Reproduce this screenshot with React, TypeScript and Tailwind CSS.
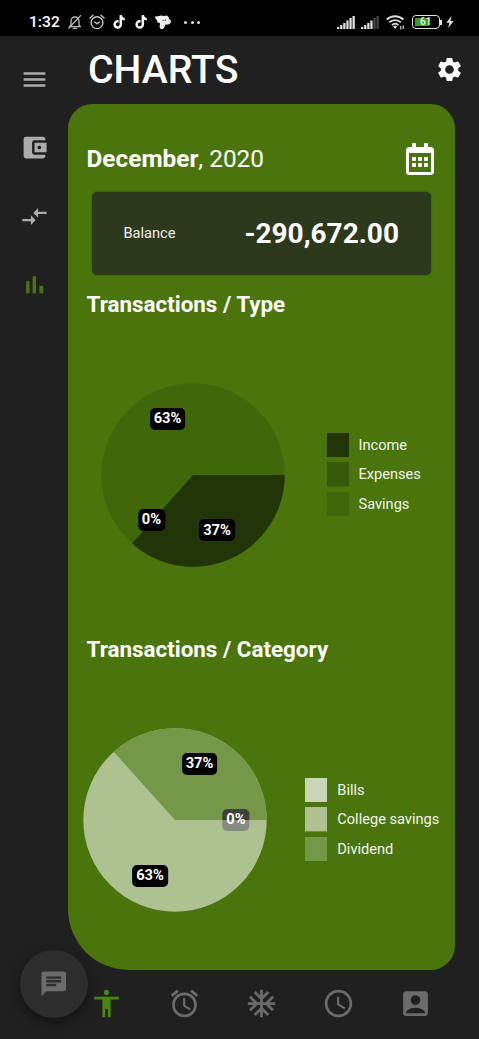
import {
  MdMenu,
  MdAccountBalanceWallet,
  MdCompareArrows,
  MdSettings,
  MdAccessibility,
  MdAlarm,
  MdAcUnit,
  MdAccessTime,
  MdAccountBox,
  MdChat,
} from "react-icons/md";
import { FaRegCalendarAlt } from "react-icons/fa";

function Bars() {
  return (
    <svg width="29" height="29" viewBox="0 0 29 29" fill="#49750c">
      <rect x="6.2" y="11.3" width="3.3" height="12" />
      <rect x="12.6" y="6.2" width="3.4" height="17.1" />
      <rect x="19.4" y="15.8" width="3.8" height="7.5" />
    </svg>
  );
}

function BellOff() {
  return (
    <svg width="14" height="16" viewBox="0 0 14 16" fill="none" stroke="#bdbdbd" strokeWidth="1.3">
      <path d="M3 11V7a4 4 0 0 1 8 0v4l1.4 1.6H1.6L3 11Z" strokeLinejoin="round" />
      <path d="M5.3 14.4h3.4M.8 14 12.6 1.6" strokeLinecap="round" />
    </svg>
  );
}

function AlarmFace() {
  return (
    <svg width="16" height="16" viewBox="0 0 16 16" fill="none" stroke="#c8c8c8" strokeWidth="1.4" strokeLinecap="round">
      <circle cx="8" cy="8.7" r="5.9" />
      <path d="M1 4 4 1.3M15 4l-3-2.7M5.8 8l2.2 1.8L10.4 8" />
    </svg>
  );
}

function Note() {
  return (
    <svg width="12" height="14" viewBox="0 0 12 14" fill="none" stroke="#f4f4f4" strokeWidth="2.5">
      <path d="M5.6 6.3H4.8a3.1 3.1 0 1 0 3 3.1V.2c.2 2.4 1.8 3.9 4 4" />
    </svg>
  );
}

function Mascot() {
  return (
    <svg width="16" height="15" viewBox="0 0 16 15">
      <path fill="#f0f0f0" d="M0 1.4 3 1.2 6 .6l3 .3 3-.4 1.6 1.6.4 2 2 1.2-.4 3-2.4 1.2-3 .3-.8 2.6-1.8 1.8-2.2-.4-.9-2.4.6-2.6L4.6 8 2.4 7.4 2 5 .6 4Z" />
      <path fill="#222" d="M7.6 4.8h.9v1.2h-.9zM9.9 4.6h.9v1.2h-.9z" />
    </svg>
  );
}

function Signal({ full }: { full: boolean }) {
  const bars = [2, 4, 6, 8.5, 11, 13];
  return (
    <svg width="18" height="13" viewBox="0 0 18 13">
      {bars.map((h, i) => (
        <rect key={i} x={i * 3.1} y={13 - h} width="2.3" height={h} fill={full || i < 4 ? "#dedede" : "#444"} />
      ))}
    </svg>
  );
}

function Wifi() {
  return (
    <svg width="19" height="15" viewBox="0 0 19 15" fill="none" stroke="#dedede" strokeWidth="1.9">
      <path d="M.8 4.5a12.2 12.2 0 0 1 16.6 0M3.3 7.4a8.4 8.4 0 0 1 11.6 0M6 10.1a4.6 4.6 0 0 1 6.4 0" />
      <path d="m7.2 11.6 1.9 2.3 1.9-2.3a2.6 2.6 0 0 0-3.8 0Z" fill="#dedede" stroke="none" />
      <path d="M14.8 11v3.5M17.2 10.5V14" strokeWidth="1.1" />
    </svg>
  );
}

function StatusBar() {
  return (
    <div className="flex h-9 shrink-0 items-start bg-black pt-[13px] text-[#f2f2f2]">
      <div className="flex h-[18px] items-center pl-[29px]">
        <span className="w-[39px] text-[15.5px] leading-[18px] font-semibold">1:32</span>
        <BellOff />
        <span className="ml-[7px] flex"><AlarmFace /></span>
        <span className="ml-[8px] flex"><Note /></span>
        <span className="ml-[10px] flex"><Note /></span>
        <span className="ml-[8px] flex"><Mascot /></span>
        <span className="ml-[13px] flex gap-[3.5px]">
          <i className="size-[3px] rounded-full bg-[#dedede]" />
          <i className="size-[3px] rounded-full bg-[#dedede]" />
          <i className="size-[3px] rounded-full bg-[#dedede]" />
        </span>
      </div>
      <div className="ml-auto flex h-[18px] items-center pr-[25px]">
        <Signal full />
        <span className="ml-[6px] flex"><Signal full={false} /></span>
        <span className="ml-[7px] flex"><Wifi /></span>
        <div className="ml-[7px] flex h-[14px] w-[28px] rounded-[4px] border-[1.5px] border-[#e2e2e2] p-[2px]">
          <div className="relative flex w-[14px] bg-[#3f9d1c]">
            <span className="absolute top-[-2px] left-[5px] text-[10px] leading-[12px] font-medium text-white">61</span>
          </div>
        </div>
        <div className="h-[5px] w-[2px] bg-[#e2e2e2]" />
        <svg className="ml-[4px]" width="8" height="12" viewBox="0 0 8 13">
          <path d="M5.6 0 0 7.2h3.3L2 13l6-7.6H4.5Z" fill="#e2e2e2" />
        </svg>
      </div>
    </div>
  );
}

type Slice = { label: string; color: string };

function Legend({ items }: { items: Slice[] }) {
  return (
    <ul className="flex flex-col gap-[5px]">
      {items.map((s) => (
        <li key={s.label} className="flex h-[24.4px] items-center gap-[10px]">
          <svg width="22" height="24.4"><rect width="22" height="24.4" fill={s.color} /></svg>
          <span className="text-[14.6px] leading-[18px] whitespace-nowrap text-[#f1f5ec]">{s.label}</span>
        </li>
      ))}
    </ul>
  );
}

type Tag = { text: string; x: number; y: number; tone?: "soft" };

function Pie({ base, wedge, path, tags }: { base: string; wedge: string; path: string; tags: Tag[] }) {
  return (
    <div className="relative size-[184px] shrink-0">
      <svg width="184" height="184" viewBox="-92 -92 184 184">
        <circle r="91.7" fill={base} />
        <path d={path} fill={wedge} />
      </svg>
      {tags.map((t) => (
        <span
          key={t.text}
          style={{ left: t.x, top: t.y }}
          className={
            "absolute flex h-[22px] -translate-x-1/2 -translate-y-1/2 items-center rounded-[5px] px-[4px] text-[14.7px] leading-none font-bold text-white " +
            (t.tone === "soft" ? "bg-linear-to-b from-[#3c423a] from-50% to-[#858b80] to-50%" : "bg-black")
          }
        >
          {t.text}
        </span>
      ))}
    </div>
  );
}

export default function App() {
  return (
    <div className="flex h-[1039px] w-[479px] flex-col overflow-hidden bg-[#202020] font-['Roboto',sans-serif] text-white">
      <StatusBar />
      <div className="flex h-[933.5px] shrink-0">
        <nav className="flex w-[68px] shrink-0 flex-col items-center gap-[39.3px] pt-[29px] text-[#acacac]">
          <MdMenu size={29} />
          <MdAccountBalanceWallet size={29} />
          <MdCompareArrows size={29} />
          <Bars />
        </nav>
        <div className="flex flex-1 flex-col">
          <header className="flex h-[68px] shrink-0 items-center justify-between pr-[15px] pl-[20px]">
            <h1 className="text-[39.2px] leading-[46px] font-medium">CHARTS</h1>
            <MdSettings size={29} className="mb-[1px]" />
          </header>
          <main className="flex w-[386.5px] flex-1 flex-col rounded-tl-[24.5px] rounded-tr-[24.5px] rounded-br-[24.5px] rounded-bl-[61px] bg-[#49750c]">
            <div className="flex h-[87.5px] shrink-0 items-end justify-between pr-[20px] pl-[18.5px]">
              <p className="pb-[19px] text-[24.4px] leading-[28px]">
                <b className="font-bold">December</b>
                <span>, 2020</span>
              </p>
              <FaRegCalendarAlt size={32} className="mr-[-1px] mb-[17px]" />
            </div>
            <section className="mx-[23.5px] flex h-[83px] shrink-0 items-center justify-between rounded-[5px] bg-[#2d391c] pt-[1px] pr-[32px] pl-[32px] shadow-[0_0_2px_rgba(0,0,0,0.4)]">
              <span className="text-[14.6px] text-[#f1f1ee]">Balance</span>
              <span className="text-[28px] leading-[34px] font-bold">-290,672.00</span>
            </section>
            <h2 className="mt-[15.5px] h-[28px] pl-[18.5px] text-[22.4px] leading-[28px] font-bold">Transactions / Type</h2>
            <div className="mt-[64.5px] flex h-[184px] items-center gap-[42px] pl-[32.5px]">
              <Pie
                base="#40680b"
                wedge="#223508"
                path="M0 0H91.7A91.7 91.7 0 0 1-61 68.5Z"
                tags={[
                  { text: "63%", x: 67, y: 36 },
                  { text: "0%", x: 51, y: 137 },
                  { text: "37%", x: 116.5, y: 147.7 },
                ]}
              />
              <Legend
                items={[
                  { label: "Income", color: "#223508" },
                  { label: "Expenses", color: "#38590a" },
                  { label: "Savings", color: "#40680b" },
                ]}
              />
            </div>
            <h2 className="mt-[68.5px] h-[28px] pl-[18.5px] text-[22.4px] leading-[28px] font-bold">Transactions / Category</h2>
            <div className="mt-[64.5px] flex h-[184px] items-center gap-[38.8px] pl-[14.5px]">
              <Pie
                base="#adc191"
                wedge="#759748"
                path="M0 0H91.7A91.7 91.7 0 0 0-61.3-68.2Z"
                tags={[
                  { text: "37%", x: 117, y: 36 },
                  { text: "0%", x: 153.5, y: 92, tone: "soft" },
                  { text: "63%", x: 67.5, y: 148 },
                ]}
              />
              <Legend
                items={[
                  { label: "Bills", color: "#cad6b9" },
                  { label: "College savings", color: "#adc191" },
                  { label: "Dividend", color: "#759748" },
                ]}
              />
            </div>
          </main>
        </div>
      </div>
      <footer className="flex flex-1 text-[#6b6b6b]">
        <button className="relative -mt-[19.5px] ml-[19.5px] flex size-[68px] shrink-0 items-center justify-center rounded-full bg-[#2d2d2d] shadow-[0_5px_12px_rgba(0,0,0,0.45)]">
          <MdChat size={29.5} />
        </button>
        <div className="mt-[17.5px] ml-[2.8px] flex h-[33px] gap-[44.3px]">
          <MdAccessibility size={33} className="text-[#49860d]" />
          <MdAlarm size={33} />
          <MdAcUnit size={33} />
          <MdAccessTime size={33} />
          <MdAccountBox size={33} />
        </div>
      </footer>
    </div>
  );
}
